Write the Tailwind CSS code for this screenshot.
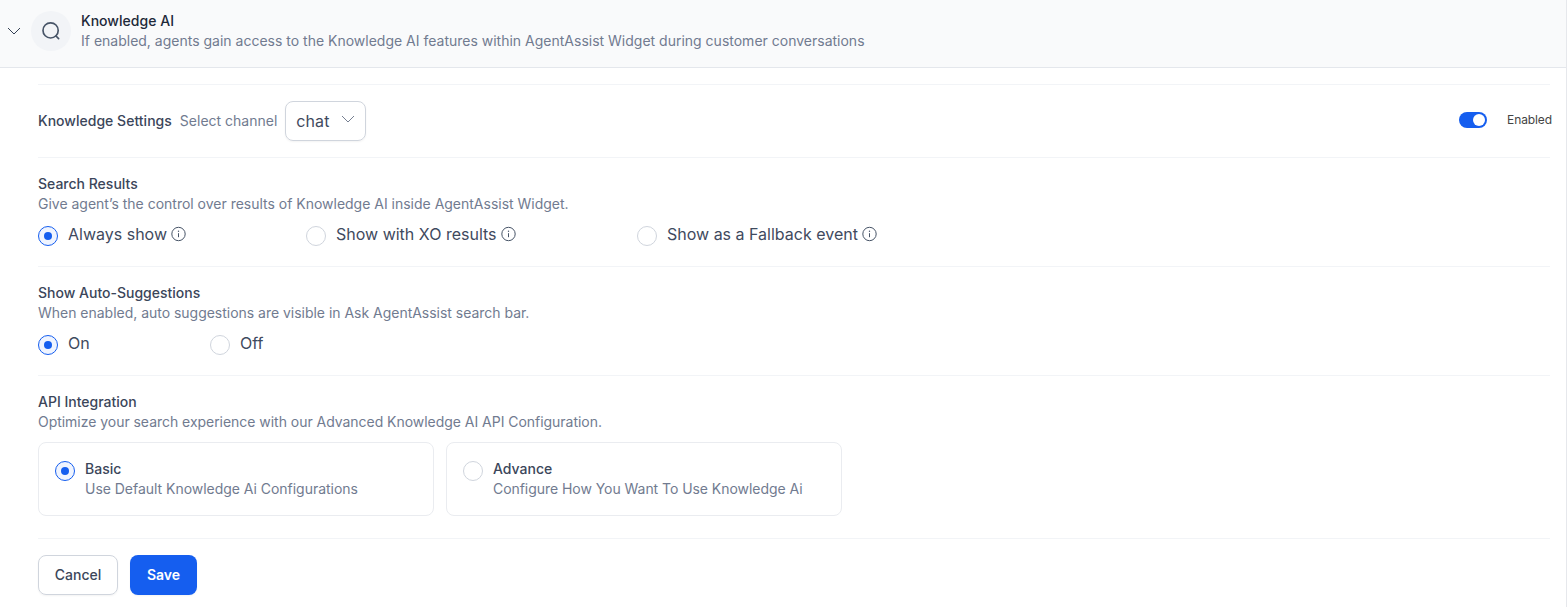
<!DOCTYPE html>
<html lang="en">
<head>
<meta charset="utf-8">
<title>Knowledge AI</title>
<script src="https://cdn.jsdelivr.net/npm/@tailwindcss/browser@4"></script>
</head>
<body class="h-[607px] overflow-hidden bg-white font-['Inter',sans-serif] text-sm leading-5 text-[#717b90]">
<svg class="hidden">
  <symbol id="info" viewBox="0 0 16 16"><circle cx="7.5" cy="8" r="6.7" fill="none" stroke="#475467" stroke-width="1"/><path d="M7.5 7.2v4" stroke="#475467" stroke-width="1"/><circle cx="7.5" cy="5.2" r=".7" fill="#475467"/></symbol>
</svg>
<div class="h-[607px] w-[1567px] border-r border-[#e6e8ec]">
  <header class="flex h-[68px] border-b border-[#e4e7ec] bg-[#f9fafb]">
    <svg class="mt-[24px] ml-[7px] size-[14px]" viewBox="0 0 14 14" fill="none" stroke="#344054" stroke-width="1"><path d="M1 4l6 6 6-6"/></svg>
    <div class="mt-[11px] ml-[10px] flex size-10 items-center justify-center rounded-full bg-[#f2f4f7]">
      <svg class="size-5" viewBox="0 0 20 20" fill="none" stroke="#475467" stroke-width="1.67" stroke-linecap="round"><circle cx="9.6" cy="9.4" r="7.6"/><path d="M15 15l2.6 2.6"/></svg>
    </div>
    <div class="mt-[11px] ml-[10px]">
      <div class="font-medium text-[#1d2939] tracking-[0.03px]">Knowledge AI</div>
      <div>If enabled, agents gain access to the Knowledge AI features within AgentAssist Widget during customer conversations</div>
    </div>
  </header>
  <main class="mt-4 ml-[38px] w-[1512px]">
    <section class="flex h-[73px] items-center border-t border-[#f2f4f7]">
      <span class="font-medium text-[#3b465a] tracking-[0.02px]">Knowledge Settings</span>
      <span class="ml-2">Select channel</span>
      <div class="ml-2 flex h-10 w-[81px] items-center rounded-lg border border-[#d0d5dd] pl-[10px] text-base tracking-[0.1px] text-[#3f4a5e] shadow-xs">chat
        <svg class="-mt-1 ml-[11px] size-[14px]" viewBox="0 0 14 14" fill="none" stroke="#667085" stroke-width="0.9"><path d="M1 4l6 6 6-6"/></svg>
      </div>
      <div class="-mr-[2px] ml-auto flex items-center">
        <div class="-mt-[3px] flex h-4 w-7 items-center justify-end rounded-full bg-[#155eef] pr-[2px]"><div class="size-3 rounded-full bg-white"></div></div>
        <span class="-mt-[3px] ml-5 text-xs tracking-[-0.1px] text-[#444]">Enabled</span>
      </div>
    </section>
    <section class="h-[109px] border-t border-[#f2f4f7] pt-4">
      <div class="font-medium text-[#3b465a]">Search Results</div>
      <div class="tracking-[-0.01px]">Give agent’s the control over results of Knowledge AI inside AgentAssist Widget.</div>
      <div class="mt-[10px] flex text-base leading-5 text-[#3f4a5e]">
        <div class="flex w-[268px]"><div class="mt-[2px] flex size-5 items-center justify-center rounded-full border border-[#155eef] bg-[#eff4ff]"><div class="size-2 rounded-full bg-[#155eef]"></div></div><span class="ml-[10px]">Always show</span><svg class="mt-[2px] ml-1 size-4"><use href="#info"/></svg></div>
        <div class="flex w-[331px]"><div class="mt-[2px] size-5 rounded-full border border-[#d0d5dd]"></div><span class="ml-[10px]">Show with XO results</span><svg class="mt-[2px] ml-1 size-4"><use href="#info"/></svg></div>
        <div class="flex"><div class="mt-[2px] size-5 rounded-full border border-[#d0d5dd]"></div><span class="ml-[10px]">Show as a Fallback event</span><svg class="mt-[2px] ml-1 size-4"><use href="#info"/></svg></div>
      </div>
    </section>
    <section class="h-[109px] border-t border-[#f2f4f7] pt-4">
      <div class="font-medium text-[#3b465a]">Show Auto-Suggestions</div>
      <div class="tracking-[-0.02px]">When enabled, auto suggestions are visible in Ask AgentAssist search bar.</div>
      <div class="mt-[10px] flex text-base leading-5 text-[#3f4a5e]">
        <div class="flex w-[172px]"><div class="mt-[2px] flex size-5 items-center justify-center rounded-full border border-[#155eef] bg-[#eff4ff]"><div class="size-2 rounded-full bg-[#155eef]"></div></div><span class="ml-[10px]">On</span></div>
        <div class="flex"><div class="mt-[2px] size-5 rounded-full border border-[#d0d5dd]"></div><span class="ml-[10px]">Off</span></div>
      </div>
    </section>
    <section class="h-[163px] border-t border-[#f2f4f7] pt-4">
      <div class="font-medium text-[#3b465a]">API Integration</div>
      <div class="tracking-[-0.035px]">Optimize your search experience with our Advanced Knowledge AI API Configuration.</div>
      <div class="mt-[10px] flex gap-3">
        <div class="flex h-[74px] w-[396px] rounded-lg border border-[#eaecf0] px-4 py-4">
          <div class="mt-[2px] flex size-5 items-center justify-center rounded-full border border-[#155eef] bg-[#eff4ff]"><div class="size-2 rounded-full bg-[#155eef]"></div></div>
          <div class="ml-[10px]"><div class="font-medium text-[#3b465a]">Basic</div><div class="tracking-[-0.03px]">Use Default Knowledge Ai Configurations</div></div>
        </div>
        <div class="flex h-[74px] w-[396px] rounded-lg border border-[#eaecf0] px-4 py-4">
          <div class="mt-[2px] size-5 rounded-full border border-[#d0d5dd]"></div>
          <div class="ml-[10px]"><div class="font-medium text-[#3b465a]">Advance</div><div class="tracking-[-0.05px]">Configure How You Want To Use Knowledge Ai</div></div>
        </div>
      </div>
    </section>
    <footer class="flex gap-3 border-t border-[#f2f4f7] pt-4">
      <button class="h-10 w-20 rounded-lg border border-[#d0d5dd] font-medium text-[#3b465a] shadow-xs">Cancel</button>
      <button class="h-10 w-[67px] rounded-lg bg-[#155eef] font-semibold text-white shadow-xs">Save</button>
    </footer>
  </main>
</div>
</body>
</html>
